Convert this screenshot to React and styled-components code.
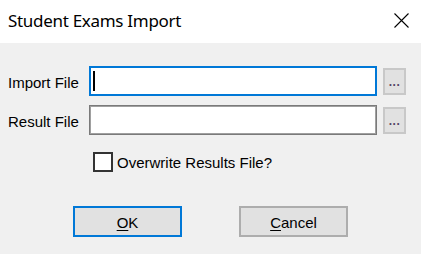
import React from "react";
import styled, { createGlobalStyle } from "styled-components";

const Global = createGlobalStyle`
  html, body {
    margin: 0;
    padding: 0;
    background: #f0f0f0;
  }
  * { box-sizing: border-box; }
`;

export default function App() {
  return (
    <>
      <Global />
      <Dialog>
        <TitleBar>
          <Title>Student Exams Import</Title>
          <CloseBtn>
            <svg width="15" height="15" viewBox="0 0 15 15">
              <path d="M0.5 0.5 L14.5 14.5 M14.5 0.5 L0.5 14.5" stroke="#000" strokeWidth="1.1" fill="none" />
            </svg>
          </CloseBtn>
        </TitleBar>
        <Body>
          <FileGrid>
            <Label>Import File</Label>
            <TextBox focused>
              <Caret />
            </TextBox>
            <Browse>...</Browse>
            <Label>Result File</Label>
            <TextBox />
            <Browse>...</Browse>
          </FileGrid>
          <CheckRow>
            <CheckBox />
            <CheckText>Overwrite Results File?</CheckText>
          </CheckRow>
          <Buttons>
            <Button primary>
              <u>O</u>K
            </Button>
            <Button>
              <u>C</u>ancel
            </Button>
          </Buttons>
        </Body>
      </Dialog>
    </>
  );
}

const Dialog = styled.div`
  width: 421px;
  height: 254px;
  background: #f0f0f0;
  display: flex;
  flex-direction: column;
  overflow: hidden;
`;

const TitleBar = styled.div`
  height: 43px;
  background: #fff;
  display: flex;
  align-items: center;
  justify-content: space-between;
  padding: 0 12px 2px 8px;
`;

const Title = styled.div`
  font-family: "Noto Sans", "Open Sans", sans-serif;
  font-size: 17px;
  color: #000;
  letter-spacing: -0.3px;
`;

const CloseBtn = styled.div`
  width: 15px;
  height: 15px;
  display: flex;
  svg { display: block; }
`;

const Body = styled.div`
  padding: 23px 15px 0 8px;
  font-family: "Liberation Sans", Arial, sans-serif;
  font-size: 15px;
  color: #000;
`;

const FileGrid = styled.div`
  display: grid;
  grid-template-columns: 75px 288px 23px;
  grid-auto-rows: 30px;
  column-gap: 6px;
  row-gap: 9px;
  align-items: center;
`;

const Label = styled.div`
  line-height: 30px;
  padding-top: 3px;
  white-space: nowrap;
`;

const TextBox = styled.div`
  height: 30px;
  background: #fff;
  border: 1px solid ${(p) => (p.focused ? "#0078d7" : "#7a7a7a")};
  box-shadow: ${(p) => (p.focused ? "inset 0 0 0 1px #0078d7" : "inset 0 0 0 1px #a0a0a0")};
  position: relative;
  padding: 4px 0 0 3px;
`;

const Caret = styled.span`
  display: block;
  width: 2px;
  height: 20px;
  background: #000;
`;

const Browse = styled.div`
  height: 27px;
  background: #e1e1e1;
  border: 2px solid #c8c8c8;
  display: flex;
  align-items: flex-end;
  justify-content: center;
  padding-bottom: 5px;
  font-size: 12px;
  font-weight: bold;
  line-height: 1;
  color: #554466;
  letter-spacing: 0.5px;
`;

const CheckRow = styled.div`
  display: flex;
  align-items: center;
  margin: 17px 0 0 85px;
  height: 20px;
`;

const CheckBox = styled.div`
  width: 20px;
  height: 20px;
  border: 2px solid #333;
  background: #fff;
`;

const CheckText = styled.span`
  margin-left: 4px;
  padding-top: 1px;
`;

const Buttons = styled.div`
  display: flex;
  gap: 57px;
  margin: 34px 0 0 65px;
`;

const Button = styled.div`
  width: 109px;
  height: 31px;
  background: #e1e1e1;
  border: 2px solid ${(p) => (p.primary ? "#0078d7" : "#adadad")};
  display: flex;
  align-items: center;
  justify-content: center;
  padding-top: 1px;
  u { text-underline-offset: 2px; }
`;
